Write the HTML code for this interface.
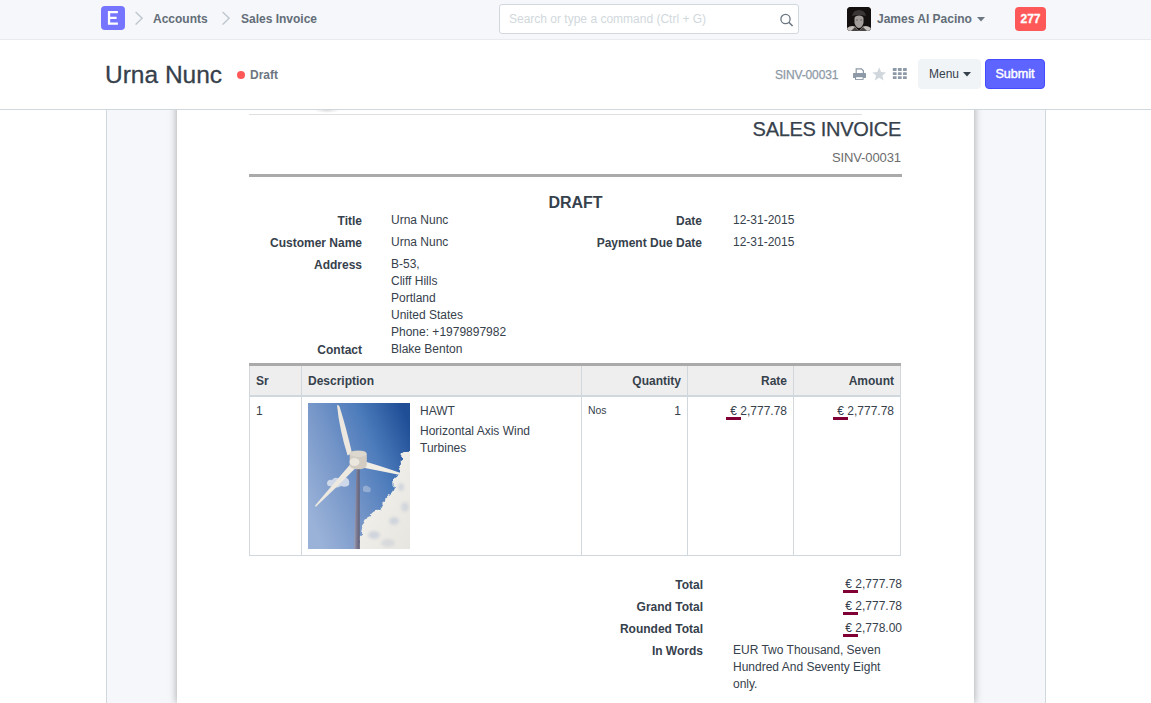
<!DOCTYPE html>
<html><head><meta charset="utf-8">
<style>
*{box-sizing:border-box;margin:0;padding:0}
html,body{width:1151px;height:703px;overflow:hidden;background:#fff;font-family:"Liberation Sans",sans-serif;color:#36414c;font-size:12px}
.abs{position:absolute;white-space:nowrap}
.navbar{position:absolute;z-index:3;left:0;top:0;width:1151px;height:40px;background:#f5f7fa;border-bottom:1px solid #e8ebee}
.logo{position:absolute;left:101px;top:6px;width:24px;height:24px;border-radius:4px;background:#7575ff;color:#fff;font-size:17px;line-height:24px;text-align:center}
.chev{position:absolute;top:11px}
.crumb{font-weight:bold;color:#636d78;font-size:12px;margin-top:1px}
.search{position:absolute;left:499px;top:4px;width:300px;height:30px;border:1px solid #d1d8dd;border-radius:3px;background:#fff}
.search span{position:absolute;left:9px;top:7px;color:#d1d8dd;font-size:12px}
.avatar{position:absolute;left:847px;top:7px;width:24px;height:24px;border-radius:4px;background:#111;overflow:hidden}
.badge{position:absolute;left:1015px;top:7px;width:31px;height:24px;border-radius:4px;background:#ff5858;color:#fff;font-weight:bold;text-align:center;line-height:25px;font-size:12px;-webkit-text-stroke:0.3px #fff}
.pagehead{position:absolute;left:0;top:40px;width:1151px;height:70px;background:#fff;border-bottom:1px solid #d1d8dd;z-index:2}
.btn{position:absolute;top:59px;height:30px;border-radius:4px;font-size:12px;line-height:28px}
.container{position:absolute;left:106px;top:110px;width:940px;height:600px;background:#f5f7fa;border-left:1px solid #d1d8dd;border-right:1px solid #d1d8dd}
.page{position:absolute;left:177px;top:90px;width:797px;height:700px;background:#fff;box-shadow:0 0 8px rgba(0,0,0,0.3)}
.lbl{position:absolute;font-weight:bold;text-align:right;white-space:nowrap}
.val{position:absolute;white-space:nowrap;line-height:17px}
table.items{position:absolute;left:249px;top:363px;width:652px;border-collapse:collapse;border-top:3px solid #aaa}
table.items th{background:#eee;border:1px solid #d1d8dd;border-bottom:2px solid #d1d8dd;padding:6px;font-weight:bold;text-align:left;line-height:17px;height:31px;padding-top:7px;padding-bottom:5px}
table.items td{border:1px solid #d1d8dd;padding:6px;vertical-align:top;line-height:17px}
.eu{position:relative}
.eu:after{content:"";position:absolute;left:-2px;top:13px;width:15px;height:3px;background:#800035}
table.items .eu:after{left:-4px}
</style></head><body>

<div class="navbar">
  <div class="logo"><svg width="24" height="24" viewBox="0 0 24 24"><path d="M6.9 5.1 H16.9 V7.2 H9.2 V10.8 H15.6 V12.9 H9.2 V16.6 H16.9 V18.7 H6.9Z" fill="#fff"/></svg></div>
  <svg class="chev" style="left:135px" width="8" height="14" viewBox="0 0 8 14"><path d="M0.6 0.9 L7.1 7.2 L0.6 13.6" fill="none" stroke="#c0c7ce" stroke-width="1.4"/></svg>
  <div class="abs crumb" style="left:153px;top:11px">Accounts</div>
  <svg class="chev" style="left:222px" width="8" height="14" viewBox="0 0 8 14"><path d="M0.6 0.9 L7.1 7.2 L0.6 13.6" fill="none" stroke="#c0c7ce" stroke-width="1.4"/></svg>
  <div class="abs crumb" style="left:241px;top:11px">Sales Invoice</div>
  <div class="search"><span>Search or type a command (Ctrl + G)</span>
    <svg style="position:absolute;left:279px;top:7px" width="16" height="16" viewBox="0 0 16 16"><circle cx="6.5" cy="7" r="4.6" fill="none" stroke="#6c7680" stroke-width="1.3"/><path d="M9.8 10.3 L13.6 14" stroke="#6c7680" stroke-width="1.6"/></svg>
  </div>
  <div class="avatar">
    <svg width="24" height="24" viewBox="0 0 24 24"><rect width="24" height="24" fill="#141010"/>
<path d="M5 9 Q6 3 12 3 Q18 3 19 9 Q12 7 5 9Z" fill="#3b3636"/>
<path d="M7.5 11 Q8 8.5 12 8.5 Q16 8.5 16.5 11 L16.5 16 Q15 21 12 21 Q9 21 7.5 16Z" fill="#a29d9a"/>
<path d="M9 12.5 h2 v1 h-2z M13 12.5 h2 v1 h-2z" fill="#6a6565"/>
<path d="M0 21 Q4 18 8 19.5 L12 24 L0 24Z M24 21 Q20 18 16 19.5 L12 24 L24 24Z" fill="#c4c0bc"/>
<path d="M4 24 L8 20 L12 24Z M20 24 L16 20 L12 24Z" fill="#4a4545"/>
</svg>
  </div>
  <div class="abs crumb" style="left:877px;top:11px">James Al Pacino</div>
  <svg style="position:absolute;left:977px;top:17px" width="8" height="5" viewBox="0 0 8 5"><path d="M0 0 L8 0 L4 4.5Z" fill="#6c7680"/></svg>
  <div class="badge">277</div>
</div>

<div class="pagehead">
  <div class="abs" style="left:105px;top:21px;font-size:24.5px;color:#36414c;-webkit-text-stroke:0.3px #36414c">Urna Nunc</div>
  <div style="position:absolute;left:237px;top:31px;width:8px;height:8px;border-radius:50%;background:#ff5858"></div>
  <div class="abs" style="left:250px;top:28px;font-weight:bold;color:#6c7680;font-size:12px">Draft</div>
  <div class="abs" style="left:775px;top:28px;color:#8d99a6;font-size:12px;letter-spacing:-0.15px;-webkit-text-stroke:0.25px #8d99a6">SINV-00031</div>
</div>
<div style="position:absolute;left:0;top:0;z-index:3">
<svg style="position:absolute;left:848px;top:62px" width="64" height="24" viewBox="0 0 64 24">
<g fill="#8d99a6">
<path d="M7.6 6.2 H13.8 L16 8.4 V11.5 H14.8 V9 L13.2 7.4 H8.8 V11.5 H7.6Z"/>
<path d="M5.6 11.1 H17.4 Q18 11.1 18 11.7 V15.3 Q18 15.9 17.4 15.9 H5.6 Q5 15.9 5 15.3 V11.7 Q5 11.1 5.6 11.1Z"/>
<path d="M7 14.6 H15.6 V17.9 H7Z"/><rect x="8.1" y="15.2" width="6.5" height="1.8" fill="#fff"/>
<path d="M31.2 5.3 L33.1 10.1 L38.2 10.4 L34.3 13.6 L35.6 18.6 L31.2 15.8 L26.8 18.6 L28.1 13.6 L24.2 10.4 L29.3 10.1Z" fill="#d1d8dd"/>
<rect x="44.8" y="6.1" width="3.8" height="2.8" rx=".4"/><rect x="49.9" y="6.1" width="3.8" height="2.8" rx=".4"/><rect x="55" y="6.1" width="3.8" height="2.8" rx=".4"/>
<rect x="44.8" y="10.3" width="3.8" height="2.8" rx=".4"/><rect x="49.9" y="10.3" width="3.8" height="2.8" rx=".4"/><rect x="55" y="10.3" width="3.8" height="2.8" rx=".4"/>
<rect x="44.8" y="14.2" width="3.8" height="2.7" rx=".4"/><rect x="49.9" y="14.2" width="3.8" height="2.7" rx=".4"/><rect x="55" y="14.2" width="3.8" height="2.7" rx=".4"/>
</g></svg>
<div class="btn" style="left:918px;width:63px;background:#f0f4f7;border:1px solid #f0f4f7;color:#36414c;padding-left:10px;line-height:29px">Menu <svg width="8" height="5" viewBox="0 0 8 5" style="vertical-align:middle;margin-left:1px"><path d="M0 0 L8 0 L4 4.5Z" fill="#36414c"/></svg></div>
<div class="btn" style="left:985px;width:60px;background:#5e64ff;border:1px solid #444bff;color:#fff;text-align:center;line-height:28px;font-size:12.6px;-webkit-text-stroke:0.45px #fff">Submit</div>
</div>

<div class="container"></div>
<div style="position:absolute;left:177px;top:40px;width:797px;height:663px;background:#fff;box-shadow:0 0 8px rgba(0,0,0,0.35);overflow:hidden">
</div>

<!-- print content -->
<div style="position:absolute;left:314px;top:108px;width:26px;height:5px;border-radius:50%;background:radial-gradient(ellipse at center,rgba(0,0,0,0.12),rgba(0,0,0,0) 70%);z-index:1"></div>
<div style="position:absolute;left:249px;top:114px;width:613px;height:1px;background:#e0e0e0"></div>
<div class="abs" style="right:250px;top:118px;font-size:20px;letter-spacing:-0.3px;color:#36414c;-webkit-text-stroke:0.25px #36414c">SALES INVOICE</div>
<div class="abs" style="right:250px;top:150px;font-size:13px;letter-spacing:-0.1px;color:#6c6c6c">SINV-00031</div>
<div style="position:absolute;left:249px;top:174px;width:653px;height:3px;background:#aaa"></div>
<div class="abs" style="left:249px;width:653px;text-align:center;top:194px;font-size:16px;font-weight:bold;color:#36414c">DRAFT</div>

<div class="lbl" style="right:789px;top:214px">Title</div>
<div class="lbl" style="right:789px;top:236px">Customer Name</div>
<div class="lbl" style="right:789px;top:258px">Address</div>
<div class="lbl" style="right:789px;top:343px">Contact</div>
<div class="val" style="left:391px;top:212px">Urna Nunc</div>
<div class="val" style="left:391px;top:234px">Urna Nunc</div>
<div class="val" style="left:391px;top:256px">B-53,<br>Cliff Hills<br>Portland<br>United States<br>Phone: +1979897982<br>Blake Benton</div>

<div class="lbl" style="right:449px;top:214px">Date</div>
<div class="lbl" style="right:449px;top:236px">Payment Due Date</div>
<div class="val" style="left:733px;top:212px">12-31-2015</div>
<div class="val" style="left:733px;top:234px">12-31-2015</div>

<table class="items">
<thead><tr>
<th style="width:52px">Sr</th><th style="width:280px">Description</th><th style="width:106px;text-align:right">Quantity</th><th style="width:106px;text-align:right">Rate</th><th style="text-align:right">Amount</th>
</tr></thead>
<tbody><tr style="height:159px">
<td>1</td>
<td><div style="display:flex">
<svg width="102" height="146" viewBox="0 0 102 146" style="flex:none">
<defs>
<linearGradient id="sky" x1="0" y1="0.75" x2="1" y2="0.15"><stop offset="0" stop-color="#9ab2d8"/><stop offset="0.35" stop-color="#7797c9"/><stop offset="0.68" stop-color="#4c7bbb"/><stop offset="1" stop-color="#1f4e97"/></linearGradient>
<linearGradient id="tower" x1="0" x2="1"><stop offset="0" stop-color="#a09fb2"/><stop offset="0.45" stop-color="#7c7b92"/><stop offset="1" stop-color="#5d5e77"/></linearGradient>
<linearGradient id="cl" x1="0" y1="0" x2="1" y2="1"><stop offset="0" stop-color="#f6f4ee"/><stop offset="1" stop-color="#e6e4de"/></linearGradient>
<filter id="bl" x="-20%" y="-20%" width="140%" height="140%"><feGaussianBlur stdDeviation="1.6"/></filter>
<filter id="bl2"><feGaussianBlur stdDeviation="0.5"/></filter>
<filter id="turb" x="-20%" y="-20%" width="140%" height="140%"><feTurbulence type="fractalNoise" baseFrequency="0.15" numOctaves="2" seed="3"/><feDisplacementMap in="SourceGraphic" scale="6" xChannelSelector="R" yChannelSelector="G"/><feGaussianBlur stdDeviation="0.45"/></filter>
</defs>
<rect width="102" height="146" fill="url(#sky)"/>
<g filter="url(#bl2)">
<path d="M19 80 Q20 76 24 77 Q27 73 31 76 Q35 73 39 75 Q42 77 41 82 Q38 85 33 83 Q28 86 24 83 Q19 84 19 80Z" fill="#e4e8f0" opacity="0.8"/>
<path d="M55 84 Q58 81 61 84 Q64 85 62 89 Q58 90 55 88Z" fill="#c0cde3" opacity="0.5"/>
<path filter="url(#turb)" d="M94 51 Q98 47 106 47 L108 152 L51 152 Q50 138 53 132 Q53 125 57 121 Q58 115 63 113 Q66 107 72 108 Q74 102 77 98 Q77 93 82 92 Q86 89 87 85 Q83 81 85 77 Q87 73 91 72 Q90 66 93 62 Q92 56 94 51Z" fill="url(#cl)"/>
</g>
<g filter="url(#bl)" opacity="0.55">
<ellipse cx="66" cy="132" rx="6" ry="4" fill="#b7c2d6"/>
<ellipse cx="86" cy="118" rx="5" ry="4" fill="#b9c4d8"/>
<ellipse cx="80" cy="140" rx="7" ry="4" fill="#c7ccd6"/>
<ellipse cx="97" cy="104" rx="4" ry="5" fill="#c0c8d8"/>
<ellipse cx="93" cy="84" rx="3" ry="4" fill="#b9c4d8"/>
</g>
<path d="M48.4 64 L51.7 64 L51.8 146 L46.2 146Z" fill="url(#tower)"/>
<path d="M29 2.2 Q30.5 1.6 31.6 3.8 Q38 24 44 50 L39.6 52.5 Q31.5 27 29 2.2Z" fill="#ece8df"/>
<path d="M50 56.5 Q70 62 95.5 71 Q96 72.6 94.5 72.6 Q72 68 49 63.6Z" fill="#f1eee6"/>
<path d="M43 60.5 L47.6 65 Q28 85 7.9 103.8 Q6.7 103.6 7.1 102.6 Q25 81 43 60.5Z" fill="#ede9e0"/>
<path d="M41.7 51 Q42 47.6 50.2 47.6 Q58.6 47.6 58.8 51 L58.8 61.5 Q58.6 66.3 50.2 66.3 Q41.8 66.3 41.7 61.5Z" fill="#d2ccc2"/>
<ellipse cx="50.2" cy="51" rx="8.3" ry="3" fill="#ddd8cf"/>
<ellipse cx="46.5" cy="59" rx="5" ry="4" fill="#ebe7df"/>
</svg>
<div style="margin-left:10px;line-height:17px">HAWT<div style="margin-top:3px">Horizontal Axis Wind<br>Turbines</div></div>
</div></td>
<td><span style="font-size:10.4px;float:left;position:relative;top:-1px">Nos</span><span style="float:right">1</span></td>
<td style="text-align:right"><span class="eu">€</span> 2,777.78</td>
<td style="text-align:right"><span class="eu">€</span> 2,777.78</td>
</tr></tbody>
</table>

<div class="lbl" style="right:448px;top:578px">Total</div>
<div class="lbl" style="right:448px;top:600px">Grand Total</div>
<div class="lbl" style="right:448px;top:622px">Rounded Total</div>
<div class="lbl" style="right:448px;top:644px">In Words</div>
<div class="val" style="right:249px;top:576px;text-align:right"><span class="eu">€</span> 2,777.78</div>
<div class="val" style="right:249px;top:598px;text-align:right"><span class="eu">€</span> 2,777.78</div>
<div class="val" style="right:249px;top:620px;text-align:right"><span class="eu">€</span> 2,778.00</div>
<div class="val" style="left:733px;top:642px">EUR Two Thousand, Seven<br>Hundred And Seventy Eight<br>only.</div>

</body></html>
